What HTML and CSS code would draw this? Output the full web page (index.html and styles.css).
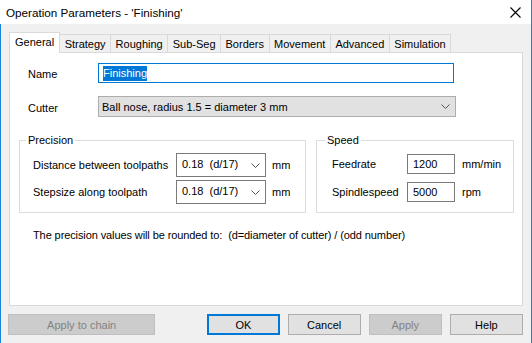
FILE: index.html
```html
<!DOCTYPE html>
<html>
<head>
<meta charset="utf-8">
<link rel="stylesheet" href="styles.css">
</head>
<body>
<div class="window">
  <div class="titlebar">
    <span class="title">Operation Parameters - 'Finishing'</span>
    <svg class="close" width="11" height="11" viewBox="0 0 11 11"><path d="M0.5 0.5 L10.5 10.5 M10.5 0.5 L0.5 10.5" stroke="#000" stroke-width="1.1" fill="none"/></svg>
  </div>
  <div class="client">
    <div class="tabs">
      <div class="tab tab-active">General</div>
      <div class="tab">Strategy</div>
      <div class="tab">Roughing</div>
      <div class="tab">Sub-Seg</div>
      <div class="tab">Borders</div>
      <div class="tab">Movement</div>
      <div class="tab">Advanced</div>
      <div class="tab">Simulation</div>
    </div>
    <div class="panel">
      <div class="row row-name">
        <span class="label">Name</span>
        <div class="textbox focus"><span class="sel">Finishing</span></div>
      </div>
      <div class="row row-cutter">
        <span class="label">Cutter</span>
        <div class="combo combo-grey">
          <span>Ball nose, radius 1.5 = diameter 3 mm</span>
          <svg width="9" height="5" viewBox="0 0 9 5"><polyline points="0.5,0.5 4.5,4.5 8.5,0.5" stroke="#555" fill="none"/></svg>
        </div>
      </div>
      <div class="groups">
        <fieldset class="group group-precision">
          <legend>Precision</legend>
          <div class="grid-precision">
            <span class="glabel">Distance between toolpaths</span>
            <div class="combo combo-small">
              <span class="val">0.18  (d/17)</span>
              <svg width="9" height="5" viewBox="0 0 9 5"><polyline points="0.5,0.5 4.5,4.5 8.5,0.5" stroke="#555" fill="none"/></svg>
            </div>
            <span class="unit">mm</span>
            <span class="glabel">Stepsize along toolpath</span>
            <div class="combo combo-small">
              <span class="val">0.18  (d/17)</span>
              <svg width="9" height="5" viewBox="0 0 9 5"><polyline points="0.5,0.5 4.5,4.5 8.5,0.5" stroke="#555" fill="none"/></svg>
            </div>
            <span class="unit">mm</span>
          </div>
        </fieldset>
        <fieldset class="group group-speed">
          <legend>Speed</legend>
          <div class="grid-speed">
            <span class="glabel">Feedrate</span>
            <div class="numbox">1200</div>
            <span class="unit">mm/min</span>
            <span class="glabel">Spindlespeed</span>
            <div class="numbox">5000</div>
            <span class="unit">rpm</span>
          </div>
        </fieldset>
      </div>
      <p class="note">The precision values will be rounded to:  (d=diameter of cutter) / (odd number)</p>
    </div>
    <div class="buttons">
      <div class="btn btn-disabled btn-chain">Apply to chain</div>
      <div class="btn btn-default">OK</div>
      <div class="btn">Cancel</div>
      <div class="btn btn-disabled">Apply</div>
      <div class="btn">Help</div>
    </div>
  </div>
</div>
</body>
</html>
```
FILE: styles.css
```css
html, body {
  margin: 0;
  padding: 0;
}
body {
  width: 532px;
  height: 343px;
  overflow: hidden;
  font-family: "Liberation Sans", Arial, sans-serif;
  font-size: 11px;
  color: #000;
  background: #f0f0f0;
}
.window {
  width: 532px;
  height: 343px;
  display: flex;
  flex-direction: column;
}
.titlebar {
  height: 24px;
  box-sizing: border-box;
  background: #fff;
  border-right: 1px solid #1883d7;
  display: flex;
  align-items: center;
  justify-content: space-between;
  padding: 0 10px 0 6px;
}
.title {
  font-size: 11.7px;
  color: #000;
  margin-top: 1px;
}
.close {
  display: block;
  margin-top: 1px;
}
.client {
  flex: 1;
  box-sizing: border-box;
  border-left: 1px solid #1883d7;
  border-right: 1px solid #1883d7;
  background: #f0f0f0;
  display: flex;
  flex-direction: column;
}
.tabs {
  display: flex;
  align-items: flex-end;
  margin-top: 8px;
  padding-left: 8px;
  height: 20px;
}
.tab {
  height: 18px;
  box-sizing: border-box;
  border: 1px solid #d9d9d9;
  border-bottom: none;
  border-left: none;
  padding: 0 4.5px;
  display: flex;
  align-items: center;
  justify-content: center;
  background: #f0f0f0;
  white-space: nowrap;
}
.tab-active {
  height: 21px;
  margin-bottom: -1px;
  background: #fff;
  border-left: 1px solid #d9d9d9;
  position: relative;
  z-index: 1;
  padding: 0 5px 2px 5px;
}
.panel {
  margin-left: 8px;
  width: 514px;
  height: 254px;
  box-sizing: border-box;
  border: 1px solid #d9d9d9;
  background: #fff;
  padding: 0;
}
.row {
  display: flex;
  align-items: center;
}
.label {
  width: 70px;
  padding-left: 18px;
  margin-top: 2px;
}
.row-name {
  margin-top: 10px;
}
.row-cutter {
  margin-top: 13px;
}
.textbox {
  width: 356px;
  height: 20px;
  box-sizing: border-box;
  border: 1px solid #0078d7;
  display: flex;
  align-items: center;
  padding-left: 4px;
}
.sel {
  background: #0078d7;
  color: #fff;
  line-height: 15px;
}
.combo {
  box-sizing: border-box;
  display: flex;
  align-items: center;
  justify-content: space-between;
}
.combo svg {
  display: block;
}
.combo-grey {
  width: 358px;
  height: 21px;
  background: #e1e1e1;
  border: 1px solid #adadad;
  padding: 0 5px 0 3px;
}
.groups {
  display: flex;
  margin-top: 16px;
  margin-left: 9px;
  gap: 10px;
}
.group {
  margin: 0;
  border: 1px solid #dcdcdc;
  box-sizing: border-box;
  height: 80px;
  min-inline-size: 0;
}
.group legend {
  line-height: 14px;
  padding: 0 2px;
  margin-left: -7px;
}
.group-precision {
  width: 287px;
  padding: 6px 0 0 13px;
}
.group-speed {
  width: 198px;
  padding: 7px 0 0 15px;
}
.grid-precision {
  display: grid;
  grid-template-columns: 143px 90px auto;
  row-gap: 3px;
  align-items: center;
}
.grid-speed {
  display: grid;
  grid-template-columns: 75px 48px auto;
  row-gap: 8px;
  align-items: center;
}
.glabel {
  white-space: nowrap;
}
.combo-small {
  height: 24px;
  background: #fff;
  border: 1px solid #7a7a7a;
  padding: 0 5px 0 5px;
}
.val {
  white-space: pre;
  margin-top: -2px;
}
.unit {
  margin-left: 6px;
}
.grid-speed .unit {
  margin-left: 7px;
}
.numbox {
  height: 20px;
  box-sizing: border-box;
  border: 1px solid #7a7a7a;
  background: #fff;
  display: flex;
  align-items: center;
  padding-left: 5px;
}
.note {
  margin: 15px 0 0 23px;
  line-height: 14px;
  white-space: pre;
  letter-spacing: -0.1px;
}
.buttons {
  display: flex;
  margin-top: 8px;
  padding-left: 7px;
}
.btn {
  width: 74px;
  height: 21px;
  box-sizing: border-box;
  border: 1px solid #adadad;
  background: #e1e1e1;
  display: flex;
  align-items: center;
  justify-content: center;
  margin-right: 8px;
}
.btn-chain {
  width: 149px;
  margin-right: 52px;
}
.btn-default {
  width: 73px;
  border: 2px solid #0078d7;
}
.btn-disabled {
  background: #cccccc;
  border-color: #bfbfbf;
  color: #838383;
}
```
